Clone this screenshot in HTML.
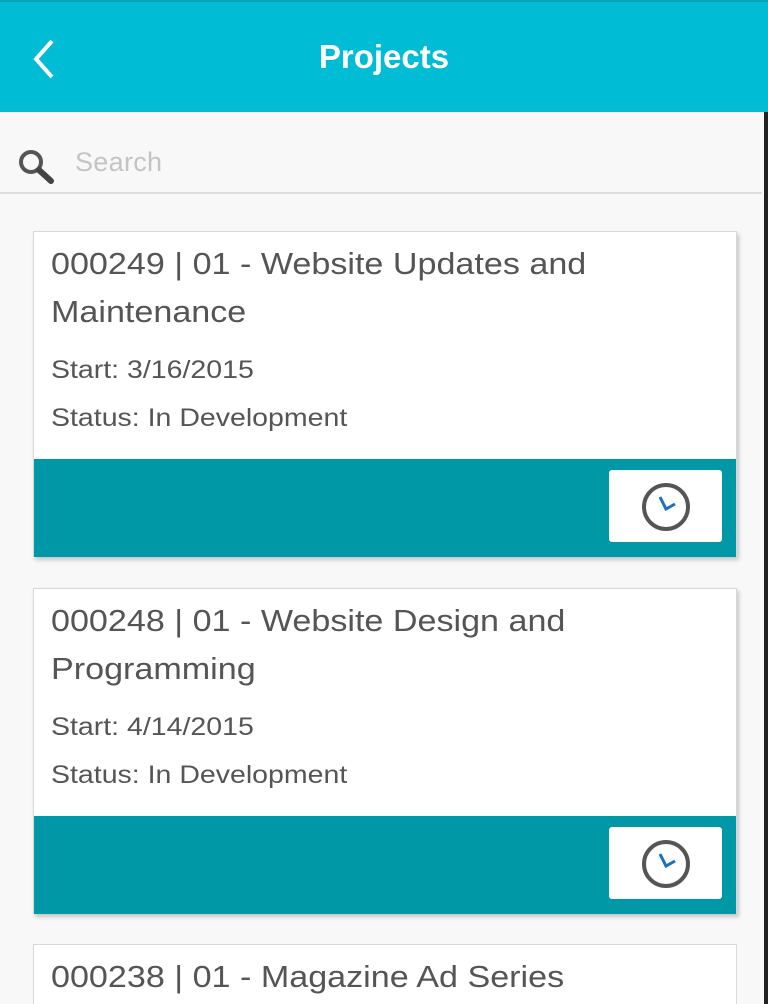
<!DOCTYPE html>
<html style="height:1004px;overflow:hidden"><head><style>
body{margin:0;width:768px;height:1004px;overflow:hidden;background:#f8f8f8;font-family:"Liberation Sans",sans-serif;position:relative}
.hdr{position:absolute;left:0;top:0;width:768px;height:112px;background:#00bcd4;border-top:2px solid #0aa3b5;box-sizing:border-box}
.hdr h1{margin:0;position:absolute;left:0;right:0;top:36px;text-align:center;color:#fff;font-size:33px;font-weight:bold}
.srch{position:absolute;left:0;top:112px;width:762px;height:82px;border-bottom:2px solid #ddd;box-sizing:border-box}
.srch span{position:absolute;left:75px;top:35px;font-size:27px;color:#c4c4c4;letter-spacing:.3px}
.card{position:absolute;left:33px;width:704px;background:#fff;border:1px solid #d8d8d8;box-shadow:2px 3px 4px rgba(0,0,0,.2);box-sizing:border-box;color:#555}
.t{position:absolute;left:17px;font-size:31px;line-height:48px;white-space:nowrap;transform:scaleX(1.1);transform-origin:0 0}
.s{position:absolute;left:17px;font-size:25px;white-space:nowrap;transform:scaleX(1.14);transform-origin:0 0}
.bar{position:absolute;left:0;right:0;height:98px;background:#0097a7}
.btn{position:absolute;left:575px;top:11px;width:113px;height:72px;background:#fff;border-radius:3px}
.rline{position:absolute;left:764px;top:112px;width:4px;height:892px;background:#222}
</style></head><body>
<div class="hdr">
<svg style="position:absolute;left:30px;top:36px" width="30" height="42"><path d="M22 3 L6 21 L22 39" stroke="#fff" stroke-width="4" fill="none"/></svg>
<h1>Projects</h1></div>
<div class="srch">
<svg style="position:absolute;left:17px;top:36px" width="42" height="42"><circle cx="14" cy="14" r="10" stroke="#555" stroke-width="4" fill="none"/><path d="M22 22 L34 33" stroke="#444" stroke-width="6" stroke-linecap="round"/></svg>
<span>Search</span></div>
<div class="rline"></div>

<div class="card" style="top:231px;height:326px">
<div class="t" style="top:8px">000249 | 01 - Website Updates and<br>Maintenance</div>
<div class="s" style="top:124px">Start: 3/16/2015</div>
<div class="s" style="top:172px">Status: In Development</div>
<div class="bar" style="top:227px"><div class="btn"><svg style="position:absolute;left:32px;top:12px" width="50" height="50"><circle cx="25" cy="25" r="22" stroke="#555" stroke-width="4" fill="none"/><path d="M19 15 L25 27 L34 22" stroke="#1e6fc0" stroke-width="3" fill="none"/></svg></div></div>
</div>

<div class="card" style="top:588px;height:326px">
<div class="t" style="top:8px">000248 | 01 - Website Design and<br>Programming</div>
<div class="s" style="top:124px">Start: 4/14/2015</div>
<div class="s" style="top:172px">Status: In Development</div>
<div class="bar" style="top:227px"><div class="btn"><svg style="position:absolute;left:32px;top:12px" width="50" height="50"><circle cx="25" cy="25" r="22" stroke="#555" stroke-width="4" fill="none"/><path d="M19 15 L25 27 L34 22" stroke="#1e6fc0" stroke-width="3" fill="none"/></svg></div></div>
</div>

<div class="card" style="top:944px;height:60px;box-shadow:none;border-bottom:none">
<div class="t" style="top:8px">000238 | 01 - Magazine Ad Series</div>
</div>
</body></html>
